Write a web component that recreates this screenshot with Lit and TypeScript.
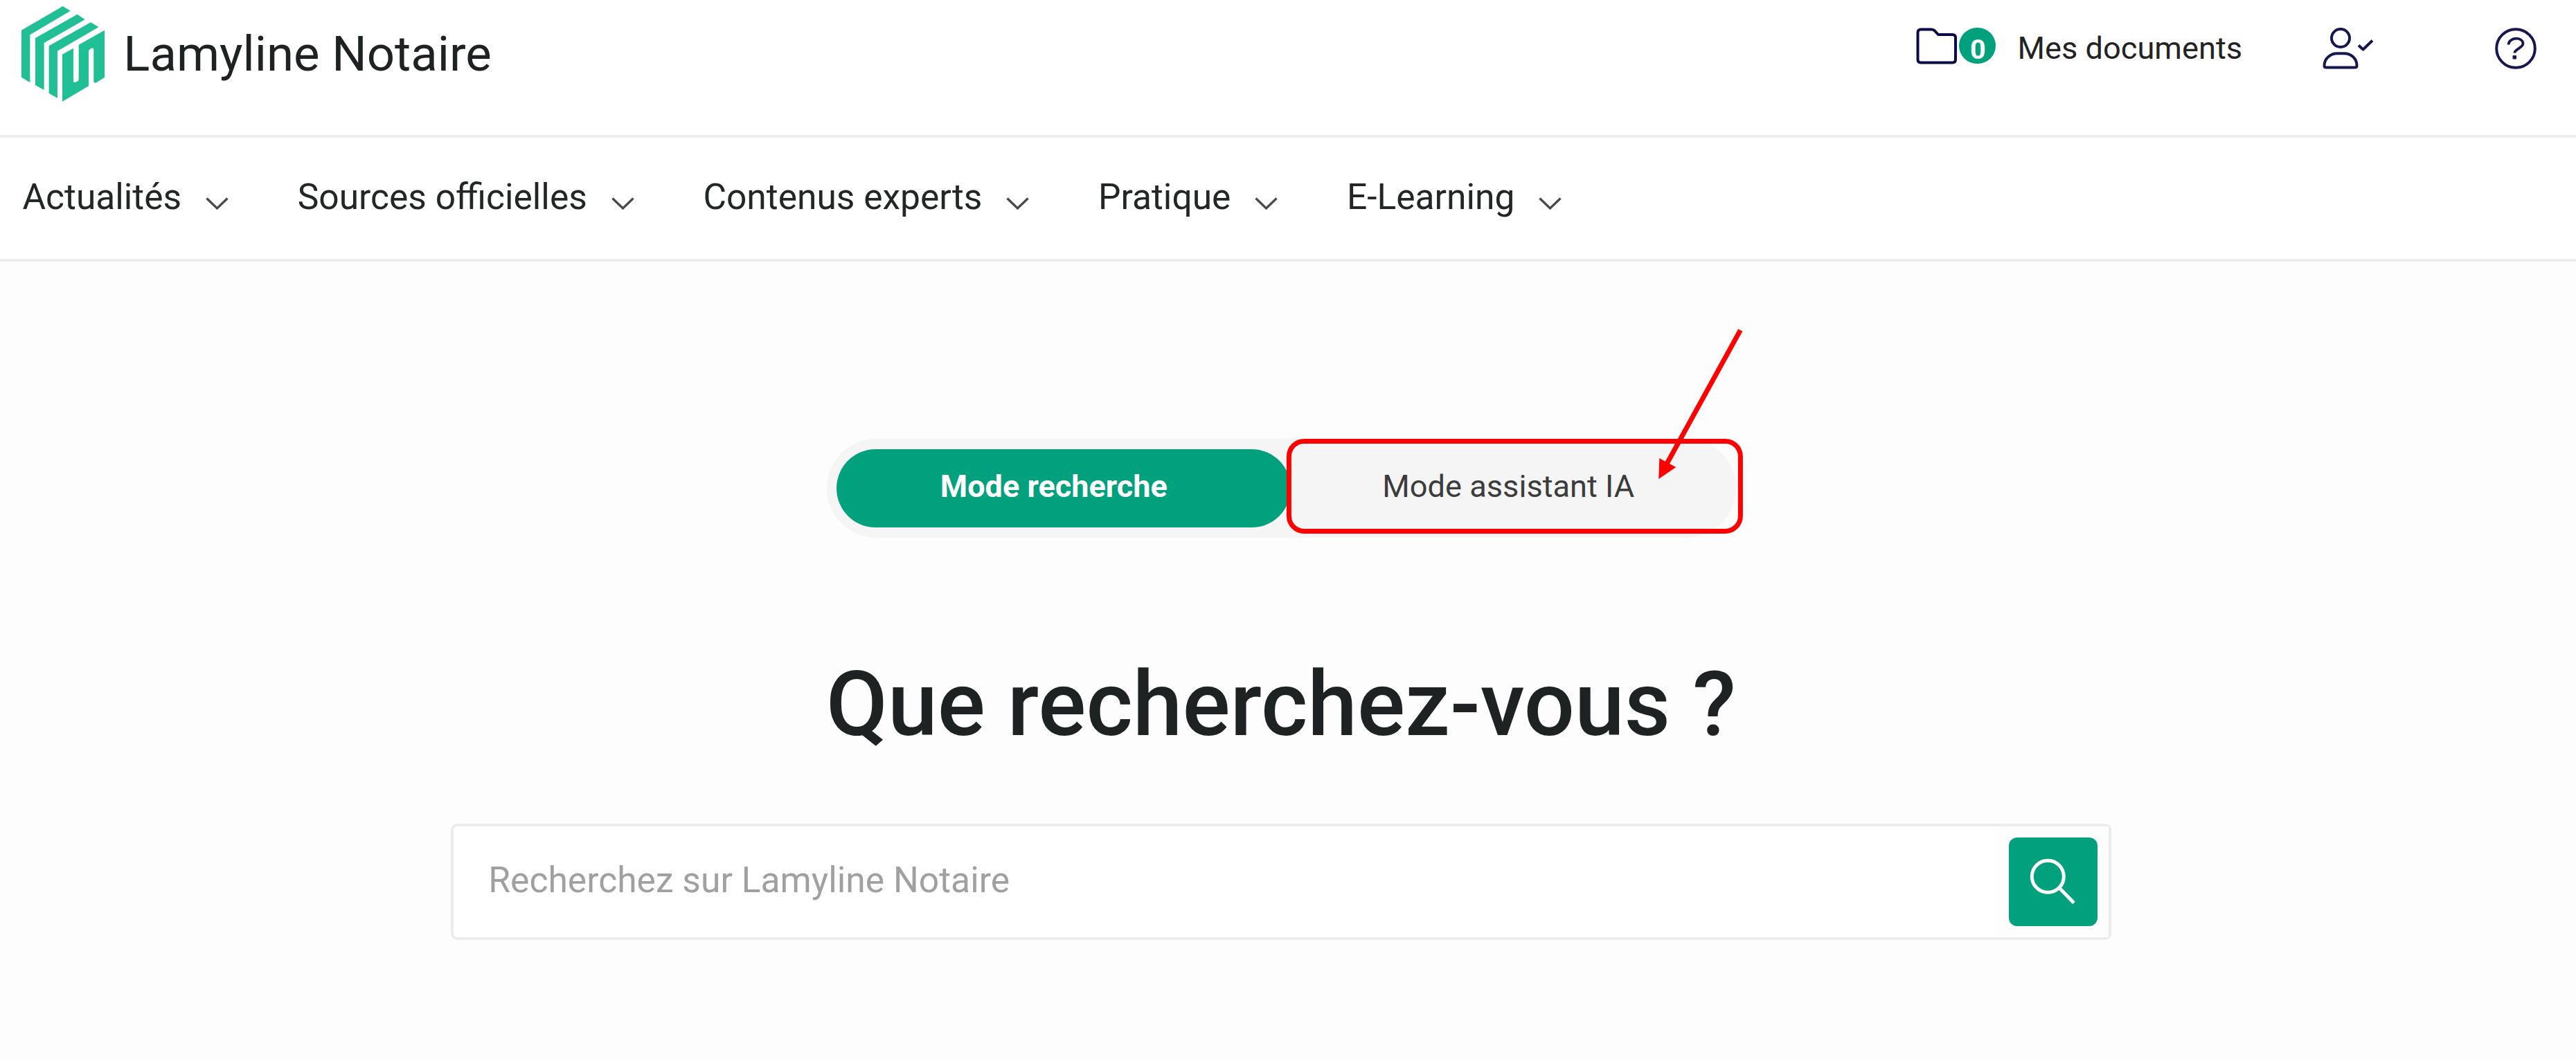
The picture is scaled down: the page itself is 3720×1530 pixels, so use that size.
import { LitElement, html, css, svg } from 'lit';
import { customElement, state } from 'lit/decorators.js';
import { classMap } from 'lit/directives/class-map.js';

const MENU = ['Actualités', 'Sources officielles', 'Contenus experts', 'Pratique', 'E-Learning'];

const MODES = [
  { id: 'search', label: 'Mode recherche' },
  { id: 'assistant', label: 'Mode assistant IA' },
];

const chevron = svg`<path d="M1.5 1.5 L16.5 16 L31.5 1.5" fill="none" stroke="#4a4a4a" stroke-width="3.4"/>`;

@customElement('site-header')
export class SiteHeader extends LitElement {
  static styles = css`
    :host {
      display: block;
      background: #fff;
      border-bottom: 4px solid #ececec;
    }
    .bar {
      display: flex;
      justify-content: space-between;
      align-items: flex-start;
      box-sizing: border-box;
      height: 195px;
      padding: 0 57px 0 31px;
    }
    .brand {
      display: flex;
      align-items: flex-start;
      gap: 27px;
      color: #1e2222;
    }
    .logo {
      display: block;
      width: 120.3px;
      height: 138px;
      margin-top: 9.3px;
    }
    .name {
      margin-top: 38px;
      font-size: 70.8px;
      line-height: 80px;
      white-space: nowrap;
    }
    .actions {
      display: flex;
      align-items: flex-start;
      padding-top: 40px;
      color: #232323;
    }
    .actions svg {
      display: block;
    }
    .badge {
      width: 52.4px;
      height: 52.4px;
      margin-left: 2.5px;
      border-radius: 50%;
      background: #00a17c;
      color: #fff;
      font-size: 39.5px;
      font-weight: 700;
      line-height: 64px;
      text-align: center;
      text-indent: 2px;
    }
    .docs {
      margin: 0 116px 0 32px;
      font-size: 45.2px;
      line-height: 60px;
      white-space: nowrap;
    }
    .user {
      margin-right: 174px;
    }
  `;
  render () {
    return html`
      <header class="bar">
        <div class="brand">
          <svg class="logo" viewBox="33 28 361 414" fill="#20bf96">
            <path d="M33 132 L212 28 L245 48 L70 152 V358 L33 336 Z"/>
            <path d="M93 166 L275 63 L308 86 L131 187 V391 L93 370 Z"/>
            <path d="M152 200 L333 98 L368 118 L189 222 V426 L152 405 Z"/>
            <path d="M210 237 L258 210 V352 Q258 360 266 358 L276 353 Q281 350 281 345 V195 L394 132 V336 L358 359 Q346 363 346 354 V217 Q346 206 337 210 L330 214 Q324 217 324 225 V374 L210 441 Z"/>
          </svg>
          <span class="name">Lamyline Notaire</span>
        </div>
        <div class="actions">
          <svg width="60" height="53" viewBox="0 0 60 53" fill="none" stroke="#0b0b47" stroke-width="4" stroke-linejoin="round">
            <path d="M2.5 7 Q2.5 2.5 7 2.5 H22 Q25 2.5 27 4.5 L32 10 H52.5 Q57 10 57 14.5 V46 Q57 50.5 52.5 50.5 H7 Q2.5 50.5 2.5 46 Z"/>
          </svg>
          <span class="badge">0</span>
          <span class="docs">Mes documents</span>
          <svg class="user" width="75" height="60" viewBox="0 0 75 60" fill="none" stroke="#17174f" stroke-width="4">
            <circle cx="26" cy="15" r="13"/>
            <path d="M2.5 55 C2.5 44 12 37.2 21 37.2 H31 C41 37.2 49.5 44 49.5 55 Q49.5 57.6 46.5 57.6 H5.5 Q2.5 57.6 2.5 55 Z"/>
            <path d="M52 25.5 L58.5 31.5 L72 18.5" stroke-linejoin="round"/>
          </svg>
          <svg width="60" height="60" viewBox="0 0 60 60" fill="none" stroke="#17174f" stroke-width="4">
            <circle cx="30" cy="30" r="27.8"/>
            <path d="M19.5 24.5 C20 13.5 40 12.5 40.5 23 C40.5 29 28.5 31 28.3 36.5" stroke-width="3.8"/>
            <rect x="25.5" y="40" width="5.5" height="5.5" rx="1" fill="#17174f" stroke="none"/>
          </svg>
        </div>
      </header>
    `;
  }
}

@customElement('site-menu')
export class SiteMenu extends LitElement {
  static styles = css`
    :host {
      display: block;
      background: #fff;
      border-bottom: 4px solid #ececec;
    }
    .menu {
      display: flex;
      gap: 99.7px;
      height: 175px;
      padding-left: 32.5px;
    }
    .item {
      display: flex;
      gap: 35px;
      color: #232626;
      font-size: 51.5px;
      line-height: 171.4px;
      white-space: nowrap;
    }
    .chevron {
      display: block;
      margin-top: 85.5px;
    }
  `;
  render () {
    return html`
      <nav class="menu">
        ${MENU.map(label => html`
          <span class="item">
            ${label}
            <svg class="chevron" width="33" height="19" viewBox="0 0 33 19">${chevron}</svg>
          </span>
        `)}
      </nav>
    `;
  }
}

@customElement('mode-switch')
export class ModeSwitch extends LitElement {
  @state() mode = 'search';

  static styles = css`
    :host {
      display: block;
      position: relative;
    }
    .track {
      display: flex;
      box-sizing: border-box;
      width: 1313px;
      height: 142.4px;
      padding: 15px 14px;
      border-radius: 72px;
      background: #f5f5f5;
    }
    .mode {
      flex: 1;
      border-radius: 57px;
      color: #3c3c3c;
      font-size: 45.2px;
      line-height: 107px;
      text-align: center;
      cursor: pointer;
    }
    .active {
      flex: none;
      box-sizing: border-box;
      width: 656.5px;
      padding-right: 28px;
      background: #00a17c;
      color: #fff;
      font-size: 45px;
      font-weight: 700;
    }
    /* red callout laid over the second mode */
    .callout {
      position: absolute;
      top: -164px;
      left: 657px;
      pointer-events: none;
    }
  `;
  render () {
    return html`
      <div class="track">
        ${MODES.map(({ id, label }) => html`
          <span
            class=${classMap({ mode: true, active: id === this.mode })}
            @click=${() => { this.mode = id; }}
          >${label}</span>
        `)}
      </div>
      <svg class="callout" width="670" height="306" viewBox="1850 470 670 306">
        <rect x="1860.4" y="637.4" width="652" height="130" rx="22" fill="none" stroke="#f00" stroke-width="7"/>
        <path d="M2512.3 477 L2405.5 671" stroke="#f00" stroke-width="7"/>
        <path d="M2394.3 692 L2395.3 662 L2419.2 675 Z" fill="#f00"/>
      </svg>
    `;
  }
}

@customElement('search-box')
export class SearchBox extends LitElement {
  static styles = css`
    :host {
      display: block;
    }
    .box {
      display: flex;
      box-sizing: border-box;
      width: 2397.5px;
      height: 168.5px;
      border: 4px solid #ececec;
      border-radius: 9px;
      background: #fff;
    }
    .placeholder {
      flex: 1;
      padding-left: 50px;
      color: #a0a0a0;
      font-size: 51.6px;
      line-height: 156.5px;
    }
    .side {
      display: flex;
      padding: 16.5px 16px 16px 17.5px;
      background: #fdfdfd;
    }
    .button {
      display: block;
      width: 127.5px;
      height: 127.5px;
      border-radius: 12px;
      background: #00a17c;
    }
  `;
  render () {
    return html`
      <div class="box">
        <span class="placeholder">Recherchez sur Lamyline Notaire</span>
        <div class="side">
          <svg class="button" viewBox="0 0 127.5 127.5" fill="none" stroke="#fff" stroke-width="5">
            <circle cx="56.3" cy="56.3" r="23"/>
            <path d="M73 73 L94 94.5"/>
          </svg>
        </div>
      </div>
    `;
  }
}

@customElement('app-root')
export class AppRoot extends LitElement {
  static styles = css`
    :host {
      display: flex;
      flex-direction: column;
      height: 1530px;
      background: #fdfdfd;
      font-family: Roboto, sans-serif;
    }
    .content {
      display: flex;
      flex-direction: column;
      align-items: center;
      padding: 256.3px 20px 0 0;
    }
    .question {
      margin: 161.4px 0 91.6px;
      color: #1e2222;
      font-size: 129px;
      font-weight: 500;
      line-height: 160px;
      white-space: nowrap;
    }
  `;
  render () {
    return html`
      <site-header></site-header>
      <site-menu></site-menu>
      <main class="content">
        <mode-switch></mode-switch>
        <h1 class="question">Que recherchez-vous ?</h1>
        <search-box></search-box>
      </main>
    `;
  }
}
